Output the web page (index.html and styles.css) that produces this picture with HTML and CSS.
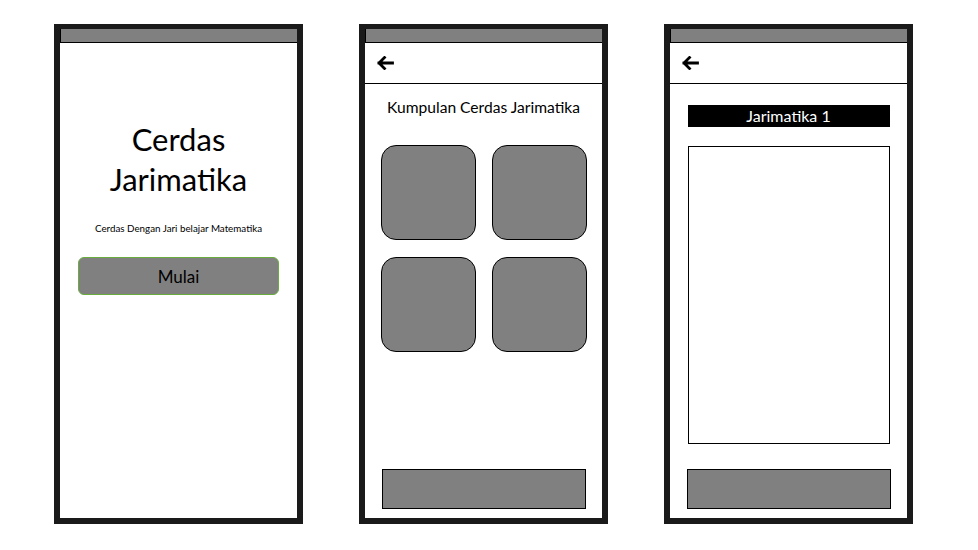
FILE: index.html
```html
<!DOCTYPE html>
<html lang="id">

<head>
    <meta charset="UTF-8">
    <meta name="viewport" content="width=device-width, initial-scale=1.0">
    <title>Cerdas Jarimatika - Wireframe</title>
    <link rel="stylesheet" href="styles.css">
</head>

<body>
    <div class="board">
        <!-- layar pembuka -->
        <div class="phone">
            <div class="status-bar"></div>
            <div class="screen screen-home">
                <h1 class="app-title">Cerdas<br>Jarimatika</h1>
                <p class="tagline">Cerdas Dengan Jari belajar Matematika</p>
                <button class="btn-start">Mulai</button>
            </div>
        </div>

        <!-- daftar materi -->
        <div class="phone">
            <div class="status-bar"></div>
            <div class="top-bar">
                <svg class="back-icon" width="18" height="14" viewBox="0 0 18 14">
                    <path d="M16.5 7H3M8.5 1.5L3 7l5.5 5.5" fill="none" stroke="#000" stroke-width="2.8" stroke-linecap="square" />
                </svg>
            </div>
            <div class="screen screen-list">
                <h2 class="list-title">Kumpulan Cerdas Jarimatika</h2>
                <div class="tile-grid">
                    <div class="tile"></div>
                    <div class="tile"></div>
                    <div class="tile"></div>
                    <div class="tile"></div>
                </div>
                <div class="bottom-bar"></div>
            </div>
        </div>

        <!-- detail materi -->
        <div class="phone">
            <div class="status-bar"></div>
            <div class="top-bar">
                <svg class="back-icon" width="18" height="14" viewBox="0 0 18 14">
                    <path d="M16.5 7H3M8.5 1.5L3 7l5.5 5.5" fill="none" stroke="#000" stroke-width="2.8" stroke-linecap="square" />
                </svg>
            </div>
            <div class="screen screen-detail">
                <div class="detail-title">Jarimatika 1</div>
                <div class="detail-box"></div>
                <div class="bottom-bar"></div>
            </div>
        </div>
    </div>
</body>

</html>
```

FILE: styles.css
```css
* {
    box-sizing: border-box;
}

body {
    margin: 0;
    background-color: #fff;
    font-family: Lato, "Open Sans", sans-serif;
    color: #000;
}

.board {
    display: flex;
    align-items: flex-start;
    gap: 56px;
    padding: 24px 0 0 54px;
}

.phone {
    display: flex;
    flex-direction: column;
    width: 249px;
    height: 500px;
    border: 6px solid #1a1a1a;
    border-top-width: 5px;
    background-color: #fff;
}

.status-bar {
    height: 14px;
    flex-shrink: 0;
    background-color: #808080;
    border-left: 1px solid #000;
    border-bottom: 1px solid #000;
}

.top-bar {
    display: flex;
    align-items: center;
    height: 41px;
    flex-shrink: 0;
    padding-left: 11px;
    border-bottom: 1px solid #000;
}

.back-icon {
    display: block;
}

.screen {
    flex: 1;
    display: flex;
    flex-direction: column;
    align-items: center;
    padding-bottom: 9px;
}

/* layar pembuka */

.screen-home {
    padding-top: 76px;
}

.app-title {
    margin: 0;
    font-size: 31px;
    font-weight: normal;
    line-height: 40px;
    text-align: center;
}

.tagline {
    margin: 23px 0 0;
    font-size: 9.8px;
}

.btn-start {
    width: 201px;
    height: 38px;
    margin-top: 23px;
    padding: 0;
    font-family: inherit;
    font-size: 17px;
    color: #000;
    background-color: #808080;
    border: 1.5px solid #6aad3f;
    border-radius: 6px;
}

/* daftar materi */

.screen-list {
    padding-top: 13px;
}

.list-title {
    margin: 0;
    font-size: 15.6px;
    font-weight: normal;
    line-height: 20px;
}

.tile-grid {
    display: grid;
    grid-template-columns: 95px 95px;
    column-gap: 16px;
    row-gap: 17px;
    margin-top: 28px;
}

.tile {
    height: 95px;
    background-color: #808080;
    border: 1px solid #000;
    border-radius: 15px;
}

.bottom-bar {
    width: 204px;
    height: 40px;
    margin-top: auto;
    background-color: #808080;
    border: 1.5px solid #000;
}

/* detail materi */

.screen-detail {
    padding-top: 21px;
}

.detail-title {
    width: 202px;
    height: 22px;
    font-size: 16px;
    line-height: 22px;
    text-align: center;
    color: #fff;
    background-color: #000;
}

.detail-box {
    width: 202px;
    height: 298px;
    margin-top: 19px;
    border: 1px solid #000;
}
```
